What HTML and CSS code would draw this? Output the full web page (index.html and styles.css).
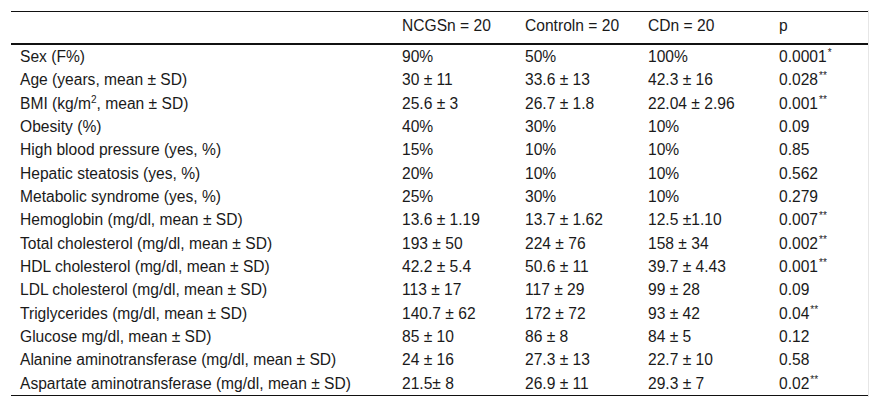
FILE: index.html
```html
<!DOCTYPE html>
<html>
<head>
<meta charset="utf-8">
<link rel="stylesheet" href="styles.css">
</head>
<body>
<div class="wrap">
<table class="data">
<colgroup>
<col class="c1"><col class="c2"><col class="c3"><col class="c4"><col class="c5">
</colgroup>
<thead>
<tr><th></th><th>NCGSn = 20</th><th>Controln = 20</th><th>CDn = 20</th><th>p</th></tr>
</thead>
<tbody>
<tr><td>Sex (F%)</td><td>90%</td><td>50%</td><td>100%</td><td>0.0001<sup>*</sup></td></tr>
<tr><td>Age (years, mean ± SD)</td><td>30 ± 11</td><td>33.6 ± 13</td><td>42.3 ± 16</td><td>0.028<sup>**</sup></td></tr>
<tr><td>BMI (kg/m<sup class="exp">2</sup>, mean ± SD)</td><td>25.6 ± 3</td><td>26.7 ± 1.8</td><td>22.04 ± 2.96</td><td>0.001<sup>**</sup></td></tr>
<tr><td>Obesity (%)</td><td>40%</td><td>30%</td><td>10%</td><td>0.09</td></tr>
<tr><td>High blood pressure (yes, %)</td><td>15%</td><td>10%</td><td>10%</td><td>0.85</td></tr>
<tr><td>Hepatic steatosis (yes, %)</td><td>20%</td><td>10%</td><td>10%</td><td>0.562</td></tr>
<tr><td>Metabolic syndrome (yes, %)</td><td>25%</td><td>30%</td><td>10%</td><td>0.279</td></tr>
<tr><td>Hemoglobin (mg/dl, mean ± SD)</td><td>13.6 ± 1.19</td><td>13.7 ± 1.62</td><td>12.5 ±1.10</td><td>0.007<sup>**</sup></td></tr>
<tr><td>Total cholesterol (mg/dl, mean ± SD)</td><td>193 ± 50</td><td>224 ± 76</td><td>158 ± 34</td><td>0.002<sup>**</sup></td></tr>
<tr><td>HDL cholesterol (mg/dl, mean ± SD)</td><td>42.2 ± 5.4</td><td>50.6 ± 11</td><td>39.7 ± 4.43</td><td>0.001<sup>**</sup></td></tr>
<tr><td>LDL cholesterol (mg/dl, mean ± SD)</td><td>113 ± 17</td><td>117 ± 29</td><td>99 ± 28</td><td>0.09</td></tr>
<tr><td>Triglycerides (mg/dl, mean ± SD)</td><td>140.7 ± 62</td><td>172 ± 72</td><td>93 ± 42</td><td>0.04<sup>**</sup></td></tr>
<tr><td>Glucose mg/dl, mean ± SD)</td><td>85 ± 10</td><td>86 ± 8</td><td>84 ± 5</td><td>0.12</td></tr>
<tr><td>Alanine aminotransferase (mg/dl, mean ± SD)</td><td>24 ± 16</td><td>27.3 ± 13</td><td>22.7 ± 10</td><td>0.58</td></tr>
<tr><td>Aspartate aminotransferase (mg/dl, mean ± SD)</td><td>21.5± 8</td><td>26.9 ± 11</td><td>29.3 ± 7</td><td>0.02<sup>**</sup></td></tr>
</tbody>
</table>
</div>
</body>
</html>
```

FILE: styles.css
```css
html, body {
  margin: 0;
  padding: 0;
  background: #ffffff;
}
body {
  font-family: "Liberation Sans", Arial, sans-serif;
  color: #1a1a1a;
  font-size: 15.6px;
}
.wrap {
  margin: 10px 0 0 11px;
  width: 857px;
  padding: 1px 0 1px 0;
  border-right: 1px solid #e6e6e6;
}
.data {
  width: 857px;
  table-layout: fixed;
  border-collapse: collapse;
  border-top: 1px solid #111;
  border-bottom: 1px solid #111;
}
.c1 { width: 382px; }
.c2 { width: 123px; }
.c3 { width: 123px; }
.c4 { width: 131px; }
.c5 { width: 98px; }
.data th {
  font-weight: normal;
  text-align: left;
  padding: 5px 8px 9px 9px;
  line-height: 17px;
  border-bottom: 2px solid #111;
  white-space: nowrap;
}
.data td {
  padding: 3px 8px 3px 9px;
  line-height: 17.33px;
  height: 17.33px;
  white-space: nowrap;
  vertical-align: middle;
}
.data sup {
  font-size: 10px;
  line-height: 0;
  vertical-align: 6px;
  margin-left: 1px;
}
.data sup.exp {
  font-size: 10px;
  vertical-align: 6px;
  margin-left: 0;
}
```
